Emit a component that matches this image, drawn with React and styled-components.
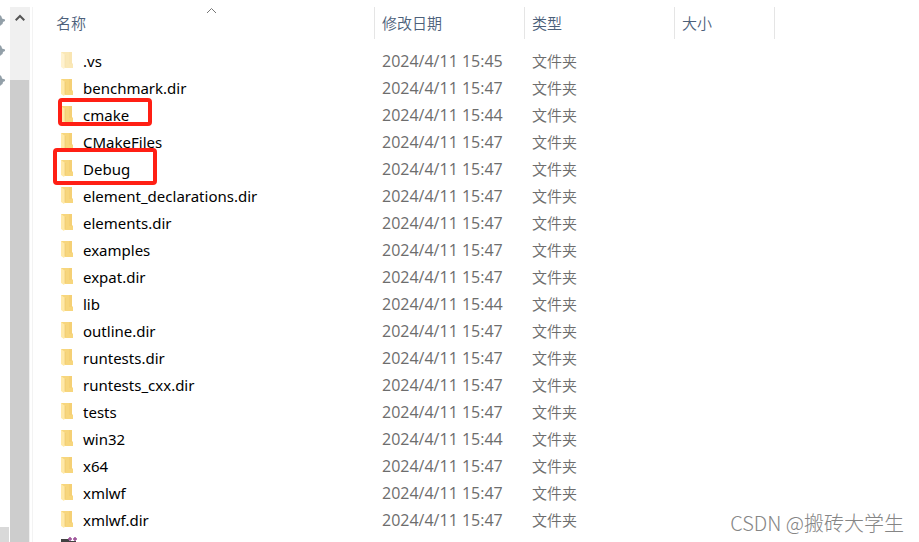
import React from 'react';
import styled, { createGlobalStyle } from 'styled-components';

const GlobalStyle = createGlobalStyle`
  * {
    box-sizing: border-box;
  }
  body {
    margin: 0;
    background: #ffffff;
    font-family: 'Open Sans', 'Noto Sans CJK SC', sans-serif;
    font-size: 15px;
  }
`;

const Explorer = styled.main`
  position: relative;
  display: flex;
  height: 100vh;
  padding-top: 7px;
  overflow: hidden;
`;

const NavEdge = styled.aside`
  display: flex;
  flex-direction: column;
  flex: none;
  gap: 18px;
  width: 10px;
  padding-top: 8px;
`;

const PinIcon = styled.svg`
  flex: none;
  width: 5px;
  height: 12px;
  fill: #929fa8;
`;

const NavThumb = styled.div`
  width: 9px;
  height: 15px;
  margin-top: auto;
  background: #d9d9d9;
`;

const ScrollBar = styled.div`
  display: flex;
  flex-direction: column;
  flex: none;
  width: 20px;
  background: #f0f0f0;
`;

const ScrollUp = styled.button`
  display: flex;
  justify-content: center;
  width: 19px;
  height: 73px;
  padding: 7px 0 0;
  border: 0;
  background: transparent;
`;

const ScrollThumb = styled.div`
  flex: 1;
  width: 19px;
  background: #cdcdcd;
`;

const ListPane = styled.section`
  flex: 1;
  min-width: 0;
  margin-left: 2px;
  border-left: 1px solid #f3f3f3;
`;

const FileTable = styled.table`
  width: 100%;
  table-layout: fixed;
  border-collapse: separate;
  border-spacing: 0;

  tbody::before {
    content: '';
    display: block;
    height: 9px;
  }
`;

const Column = styled.col`
  width: ${({ $width }) => $width};
`;

const HeaderCell = styled.th`
  position: relative;
  height: 32px;
  padding: 0 0 0 ${({ $first }) => ($first ? '23px' : '7px')};
  border-right: 1px solid #e5e5e5;
  text-align: left;
`;

const HeaderButton = styled.button`
  display: block;
  padding: 0;
  border: 0;
  background: none;
  color: #4c607a;
  font-family: 'Noto Sans CJK SC', sans-serif;
  font-size: 15px;
  font-weight: 350;
  line-height: 32px;
`;

const SortMark = styled.svg`
  position: absolute;
  top: 0;
  left: 50%;
  width: 14px;
  height: 8px;
`;

const Row = styled.tr`
  height: 27px;
`;

const Cell = styled.td`
  height: 27px;
  padding: 0 0 0 7px;
  color: #6d6d6d;
  line-height: 27px;
  white-space: nowrap;
`;

const DateCell = styled(Cell)`
  font-size: 16px;
`;

const TypeCell = styled(Cell)`
  font-weight: 350;
`;

const NameCell = styled.td`
  position: relative;
  height: 27px;
  padding: 0 0 0 28px;
`;

const FileName = styled.div`
  display: flex;
  align-items: center;
  gap: 10px;
  height: 27px;
  color: #000000;
  font-family: 'Noto Sans', sans-serif;
  line-height: 27px;
  white-space: nowrap;
`;

const FolderSvg = styled.svg`
  flex: none;
  width: 12px;
  height: 19px;
  opacity: ${({ $faded }) => ($faded ? 0.55 : 1)};
`;

const Highlight = styled.span`
  position: absolute;
  top: ${({ $large }) => ($large ? '-8px' : '-4px')};
  left: ${({ $large }) => ($large ? '20px' : '25px')};
  width: ${({ $large }) => ($large ? '104px' : '94px')};
  height: ${({ $large }) => ($large ? '37px' : '28px')};
  border: 4px solid #ff1f14;
  border-radius: 4px;
`;

const SolutionSvg = styled.svg`
  flex: none;
  width: 18px;
  height: 23px;
`;

const Watermark = styled.div`
  position: absolute;
  right: 15px;
  bottom: 4px;
  color: #858585;
  font-family: 'Noto Sans CJK SC', sans-serif;
  font-size: 20px;
  font-weight: 300;
  line-height: 30px;
`;

const folders = [
  { name: '.vs', time: '15:45', faded: true },
  { name: 'benchmark.dir', time: '15:47' },
  { name: 'cmake', time: '15:44', mark: 'small' },
  { name: 'CMakeFiles', time: '15:47' },
  { name: 'Debug', time: '15:47', mark: 'large' },
  { name: 'element_declarations.dir', time: '15:47' },
  { name: 'elements.dir', time: '15:47' },
  { name: 'examples', time: '15:47' },
  { name: 'expat.dir', time: '15:47' },
  { name: 'lib', time: '15:44' },
  { name: 'outline.dir', time: '15:47' },
  { name: 'runtests.dir', time: '15:47' },
  { name: 'runtests_cxx.dir', time: '15:47' },
  { name: 'tests', time: '15:47' },
  { name: 'win32', time: '15:44' },
  { name: 'x64', time: '15:47' },
  { name: 'xmlwf', time: '15:47' },
  { name: 'xmlwf.dir', time: '15:47' },
];

const headers = ['名称', '修改日期', '类型', '大小'];

const Pin = () => (
  <PinIcon viewBox="0 0 5 12" aria-hidden="true">
    <path d="M0 0L1.500 1.500L2 3.500L5 4.500V6L3 7L2.500 9L1 10L0 11Z" />
  </PinIcon>
);

const Folder = ({ faded }) => (
  <FolderSvg viewBox="0 0 12 19" $faded={faded} aria-hidden="true">
    <path d="M0 0H11V11L12 12V16H3L0 3Z" fill="#f7d67d" />
    <path d="M8 0H11V12H8Z" fill="#f5d075" />
    <path d="M0 0L4 3V15L3 17L0 15Z" fill="#ffe9a8" />
    <path d="M4 3V15" stroke="#e9c469" strokeWidth="0.6" />
  </FolderSvg>
);

const FolderRow = ({ folder }) => (
  <Row>
    <NameCell>
      <FileName>
        <Folder faded={folder.faded} />
        {folder.name}
      </FileName>
      {folder.mark && <Highlight $large={folder.mark === 'large'} />}
    </NameCell>
    <DateCell>2024/4/11 {folder.time}</DateCell>
    <TypeCell>文件夹</TypeCell>
    <Cell />
  </Row>
);

export default function App() {
  return (
    <>
      <GlobalStyle />
      <Explorer>
        <NavEdge>
          <Pin />
          <Pin />
          <Pin />
          <NavThumb />
        </NavEdge>
        <ScrollBar>
          <ScrollUp type="button" aria-label="Scroll up">
            <svg width="10" height="8" viewBox="0 0 10 8">
              <path
                d="M0.7 6.3L5 2L9.3 6.3"
                fill="none"
                stroke="#555555"
                strokeWidth="2"
              />
            </svg>
          </ScrollUp>
          <ScrollThumb />
        </ScrollBar>
        <ListPane>
          <FileTable>
            <colgroup>
              <Column $width="342px" />
              <Column $width="150px" />
              <Column $width="150px" />
              <Column $width="100px" />
              <Column $width="auto" />
            </colgroup>
            <thead>
              <tr>
                {headers.map((title, index) => (
                  <HeaderCell key={title} $first={index === 0}>
                    <HeaderButton type="button">{title}</HeaderButton>
                    {index === 0 && (
                      <SortMark viewBox="0 0 14 8" aria-hidden="true">
                        <path
                          d="M3 6L7.500 1.500L12 6"
                          fill="none"
                          stroke="#777777"
                        />
                      </SortMark>
                    )}
                  </HeaderCell>
                ))}
              </tr>
            </thead>
            <tbody>
              {folders.map(folder => (
                <FolderRow key={folder.name} folder={folder} />
              ))}
              <Row>
                <NameCell>
                  <FileName>
                    <SolutionSvg viewBox="0 0 18 23" aria-hidden="true">
                      <path d="M0 3H8V5H15V21H0Z" fill="#424242" />
                      <path
                        d="M7 3H11M9 1V5M12 3H16M14 1V5"
                        stroke="#9b4f96"
                        strokeWidth="1.500"
                      />
                    </SolutionSvg>
                  </FileName>
                </NameCell>
              </Row>
            </tbody>
          </FileTable>
        </ListPane>
        <Watermark>CSDN @搬砖大学生</Watermark>
      </Explorer>
    </>
  );
}
